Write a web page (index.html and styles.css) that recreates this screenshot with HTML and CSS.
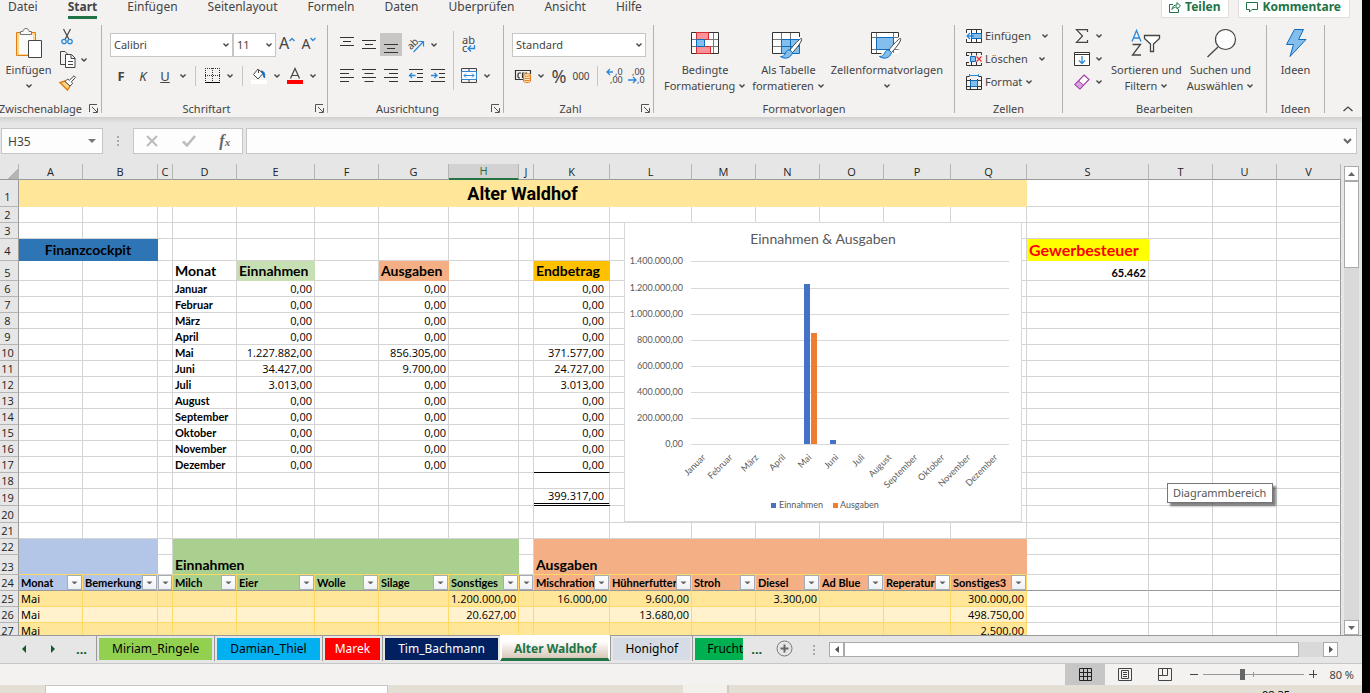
FILE: index.html
```html
<!DOCTYPE html>
<html lang="de">
<head>
    <meta charset="UTF-8">
    <meta name="viewport" content="width=device-width, initial-scale=1.0">
    <title>Alter Waldhof - Excel</title>
    <link rel="stylesheet" href="styles.css">
</head>
<body>
    <svg class="defs" aria-hidden="true">
        <symbol id="chev" viewBox="0 0 8 8"><path d="M1.500 2.500L4 5l2.500-2.500" fill="none" stroke="#444" stroke-width="1.400"/></symbol>
        <symbol id="launcher" viewBox="0 0 9 9"><path d="M.5 8V.5H8M3 3l5 5M8.500 4v4.500H4" fill="none" stroke="#555"/></symbol>
        <symbol id="brush" viewBox="0 0 24 24"><path d="M22.500 1.500c-1.500-.5-9 8-11.500 11.500l2.500 2.500C17 12 24 3.500 22.500 1.500z" fill="#fff" stroke="#444"/><path d="M11 13c-4-.5-4 3-5.500 5-1 1.200-2.500 1.500-4 1.500 4 3 10.500 2 12-4z" fill="#83beec" stroke="#0f6cbd"/></symbol>
    </svg>

    <div class="app">
        <nav class="tabs">
            <a href="#">Datei</a>
            <a href="#" class="active">Start</a>
            <a href="#">Einfügen</a>
            <a href="#">Seitenlayout</a>
            <a href="#">Formeln</a>
            <a href="#">Daten</a>
            <a href="#">Überprüfen</a>
            <a href="#">Ansicht</a>
            <a href="#">Hilfe</a>
            <div class="share">
                <button type="button"><svg width="12" height="12" viewBox="0 0 12 12" fill="none" stroke="#217346"><path d="M4 3.500H.5v8h9V8M3 8.500c0-3 2-4.500 5-4.500V1.500L11.500 5 8 8V6C6 6 4 6.500 3 8.500z"/></svg>Teilen</button>
                <button type="button"><svg width="12" height="12" viewBox="0 0 12 12" fill="none" stroke="#217346"><path d="M.5 1.500h11v7H6L3.500 11V8.500h-3z"/></svg>Kommentare</button>
            </div>
        </nav>

        <div class="ribbon">
            <section class="group clipboard">
                <div class="body">
                    <button type="button" class="big">
                        <svg width="28" height="32" viewBox="0 0 28 32"><path d="M1.500 5.500h19v23h-19z" fill="#ffd98a" stroke="#e07b16"/><path d="M4 8h14v19H4z" fill="#fafafa"/><path d="M5.500 7.500v-3H8c0-4 6-4 6 0h2.500v3z" fill="#fafafa" stroke="#777"/><path d="M13.500 13.500h13v17h-13z" fill="#fff" stroke="#444"/></svg>
                        <span>Einfügen</span>
                        <svg class="chev"><use href="#chev"/></svg>
                    </button>
                    <div class="stack">
                        <div class="line"><button type="button" class="ico" aria-label="Ausschneiden"><svg width="12" height="16" viewBox="0 0 12 16" fill="none"><path d="M2.500 0L8 10.500M9.500 0L4 10.500" stroke="#444" stroke-width="1.200"/><circle cx="3" cy="12.500" r="2.200" stroke="#2b88d8" stroke-width="1.300"/><circle cx="9" cy="12.500" r="2.200" stroke="#2b88d8" stroke-width="1.300"/></svg></button></div>
                        <div class="line"><button type="button" class="ico" aria-label="Kopieren"><svg width="17" height="17" viewBox="0 0 17 17" fill="none" stroke="#444"><path d="M6 13.500H1.500v-13H6L8.500 3"/><path d="M6.500 3.500h6l3.500 3.500v9.500H6.500zM12 4v3.500h4M9 10.500h5M9 13.500h5" fill="#fff"/></svg></button><button type="button" class="drop" aria-label="Mehr"><svg class="chev"><use href="#chev"/></svg></button></div>
                        <div class="line"><button type="button" class="ico" aria-label="Format übertragen"><svg width="17" height="16" viewBox="0 0 17 16"><path d="M6 6L1 7.500 8.500 15l2.700-4.500z" fill="#ffd98a" stroke="#e07b16" stroke-width="1.400"/><path d="M15 .8l-4.500 4.400-2.200-1-2.300 2.300 5 4.500 2.500-2.300-1-2L16.500 2.300z" fill="#fff" stroke="#444"/></svg></button></div>
                    </div>
                </div>
                <footer>Zwischenablage<svg class="launcher"><use href="#launcher"/></svg></footer>
            </section>

            <section class="group font">
                <div class="body rows">
                    <div class="line">
                        <select class="fontname" aria-label="Schriftart"><option>Calibri</option></select>
                        <select class="fontsize" aria-label="Schriftgrad"><option>11</option></select>
                        <button type="button" class="ico grow">A<svg width="6" height="5" viewBox="0 0 6 5"><path d="M.5 4L3 1.500 5.500 4" fill="none" stroke="#2b88d8" stroke-width="1.300"/></svg></button>
                        <button type="button" class="ico shrink">A<svg width="6" height="5" viewBox="0 0 6 5"><path d="M.5 1L3 3.500 5.500 1" fill="none" stroke="#2b88d8" stroke-width="1.300"/></svg></button>
                    </div>
                    <div class="line">
                        <button type="button" class="ico"><b>F</b></button>
                        <button type="button" class="ico"><i>K</i></button>
                        <button type="button" class="ico"><u>U</u></button>
                        <button type="button" class="drop" aria-label="Mehr"><svg class="chev"><use href="#chev"/></svg></button>
                        <span class="sep"></span>
                        <button type="button" class="ico" aria-label="Rahmen"><svg width="15" height="15" viewBox="0 0 15 15"><path d="M0 .5h15M0 7.500h15M.5 0v13M7.500 0v13M14.500 0v13" fill="none" stroke="#333" stroke-dasharray="1 1"/><path d="M0 14.500h15" stroke="#000"/></svg></button>
                        <button type="button" class="drop" aria-label="Mehr"><svg class="chev"><use href="#chev"/></svg></button>
                        <span class="sep"></span>
                        <button type="button" class="ico" aria-label="Füllfarbe"><svg width="16" height="16" viewBox="0 0 16 16"><path d="M7 1L2.500 6.500 7 11l5-5.500L7.500 1.500V5" fill="#fff" stroke="#444"/><path d="M10 3c4 0 4 4 3.500 7-1-1-1-4-3.500-7z" fill="#0f6cbd" stroke="#0f6cbd"/><path d="M0 12h16v4H0z" fill="#fff"/></svg></button>
                        <button type="button" class="drop" aria-label="Mehr"><svg class="chev"><use href="#chev"/></svg></button>
                        <button type="button" class="ico" aria-label="Schriftfarbe"><svg width="16" height="16" viewBox="0 0 16 16"><path d="M3.500 10.500L8 .5l4.500 10M5 7.500h6" fill="none" stroke="#444" stroke-width="1.200"/><path d="M0 12h16v4H0z" fill="red"/></svg></button>
                        <button type="button" class="drop" aria-label="Mehr"><svg class="chev"><use href="#chev"/></svg></button>
                    </div>
                </div>
                <footer>Schriftart<svg class="launcher"><use href="#launcher"/></svg></footer>
            </section>

            <section class="group align">
                <div class="body">
                    <div class="rows">
                        <div class="line">
                            <button type="button" class="ico" aria-label="Oben"><svg width="14" height="16" viewBox="0 0 14 16" stroke="#333"><path d="M0 .5h14M3 4.500h8M0 8.500h14"/></svg></button>
                            <button type="button" class="ico" aria-label="Mitte"><svg width="14" height="16" viewBox="0 0 14 16" stroke="#333"><path d="M0 3.500h14M3 7.500h8M0 11.500h14"/></svg></button>
                            <button type="button" class="ico on" aria-label="Unten"><svg width="14" height="16" viewBox="0 0 14 16" stroke="#333"><path d="M0 7.500h14M3 11.500h8M0 15.500h14"/></svg></button>
                            <span class="space"></span>
                            <button type="button" class="ico" aria-label="Ausrichtung"><svg width="17" height="17" viewBox="0 0 17 17"><text x="-1" y="11" font-size="10" fill="#444" transform="rotate(-45 5 8)">ab</text><path d="M5.500 16L15 6M10.500 5.500h5v5" fill="none" stroke="#2b88d8" stroke-width="1.200"/></svg></button>
                            <button type="button" class="drop" aria-label="Mehr"><svg class="chev"><use href="#chev"/></svg></button>
                        </div>
                        <div class="line">
                            <button type="button" class="ico" aria-label="Links"><svg width="14" height="14" viewBox="0 0 14 14" stroke="#333"><path d="M0 .5h14M0 4.500h9M0 8.500h14M0 12.500h9"/></svg></button>
                            <button type="button" class="ico" aria-label="Zentriert"><svg width="14" height="14" viewBox="0 0 14 14" stroke="#333"><path d="M0 .5h14M2.500 4.500h9M0 8.500h14M2.500 12.500h9"/></svg></button>
                            <button type="button" class="ico" aria-label="Rechts"><svg width="14" height="14" viewBox="0 0 14 14" stroke="#333"><path d="M0 .5h14M5 4.500h9M0 8.500h14M5 12.500h9"/></svg></button>
                            <span class="space"></span>
                            <button type="button" class="ico" aria-label="Einzug verkleinern"><svg width="14" height="14" viewBox="0 0 14 14" fill="none"><path d="M0 .5h14M8 4.500h6M8 8.500h6M0 12.500h14" stroke="#333"/><path d="M6.500 6.500h-6M3 4L.5 6.500 3 9" stroke="#2b88d8" stroke-width="1.300"/></svg></button>
                            <button type="button" class="ico" aria-label="Einzug vergrößern"><svg width="14" height="14" viewBox="0 0 14 14" fill="none"><path d="M0 .5h14M8 4.500h6M8 8.500h6M0 12.500h14" stroke="#333"/><path d="M0 6.500h6M3.500 4L6 6.500 3.500 9" stroke="#2b88d8" stroke-width="1.300"/></svg></button>
                        </div>
                    </div>
                    <span class="sep tall"></span>
                    <div class="rows">
                        <div class="line">
                            <button type="button" class="ico" aria-label="Textumbruch"><svg width="16" height="18" viewBox="0 0 16 18"><text x="1" y="8" font-size="11" fill="#444"><tspan>ab</tspan><tspan x="1" dy="8">c</tspan></text><path d="M13.500 9v3.500h-6M10 9.500l-3 3 3 3" fill="none" stroke="#2b88d8" stroke-width="1.300"/></svg></button>
                        </div>
                        <div class="line">
                            <button type="button" class="ico" aria-label="Verbinden"><svg width="16" height="15" viewBox="0 0 16 15" fill="none"><path d="M.5.5h15v14H.5zM8 .5v3M8 11.500v3" stroke="#444"/><path d="M.5 3.500h15v8H.5z" fill="#fff" stroke="#2b88d8"/><path d="M3 7.500h10M5 5.500l-2 2 2 2M11 5.500l2 2-2 2" stroke="#2b88d8"/></svg></button>
                            <button type="button" class="drop" aria-label="Mehr"><svg class="chev"><use href="#chev"/></svg></button>
                        </div>
                    </div>
                </div>
                <footer>Ausrichtung<svg class="launcher"><use href="#launcher"/></svg></footer>
            </section>

            <section class="group number">
                <div class="body rows">
                    <div class="line">
                        <select class="numformat" aria-label="Zahlenformat"><option>Standard</option></select>
                    </div>
                    <div class="line">
                        <button type="button" class="ico" aria-label="Währung"><svg width="17" height="14" viewBox="0 0 17 14"><path d="M8 10.500H.5v-9h15V5M6 4H4L3 5v3l1 1h1M7.500 9V4h2M12 4h-1v2" fill="none" stroke="#333" stroke-width="1.200"/><path d="M8.500 6v6c0 2 7 2 7 0V6z" fill="#fff1dc" stroke="#e07b16"/><ellipse cx="12" cy="6" rx="3.500" ry="1.300" fill="#fff1dc" stroke="#e07b16"/><path d="M8.500 8.500c1 1.500 6 1.500 7 0M8.500 10.500c1 1.500 6 1.500 7 0" fill="none" stroke="#e07b16"/></svg></button>
                        <button type="button" class="drop" aria-label="Mehr"><svg class="chev"><use href="#chev"/></svg></button>
                        <button type="button" class="ico percent">%</button>
                        <button type="button" class="ico thousands">000</button>
                        <span class="sep"></span>
                        <button type="button" class="ico" aria-label="Dezimalstelle hinzufügen"><svg width="17" height="16" viewBox="0 0 17 16"><text x="9" y="7" font-size="9" fill="#444"><tspan>,0</tspan><tspan x="4" dy="8">,00</tspan></text><path d="M7 4H1.500M4 1L1 4l3 3" fill="none" stroke="#2b88d8" stroke-width="1.300"/></svg></button>
                        <button type="button" class="ico" aria-label="Dezimalstelle löschen"><svg width="17" height="16" viewBox="0 0 17 16"><text x="4" y="7" font-size="9" fill="#444"><tspan>,00</tspan><tspan x="9" dy="8">,0</tspan></text><path d="M0 12h7.500M5 9l3 3-3 3" fill="none" stroke="#2b88d8" stroke-width="1.300"/></svg></button>
                    </div>
                </div>
                <footer>Zahl<svg class="launcher"><use href="#launcher"/></svg></footer>
            </section>

            <section class="group styles">
                <div class="body">
                    <button type="button" class="big">
                        <svg width="28" height="32" viewBox="0 0 28 32"><path d="M.5 5.500h27v21H.5z" fill="#fff"/><path d="M.5 12.500h27M.5 19.500h27M22.500 5v21" stroke="#777"/><path d="M.5 5.500h27v21H.5z" fill="none" stroke="#333"/><path d="M5.500 5.500h12v7h-12zM5.500 19.500h14v7h-14z" fill="#ff9199" stroke="#d92c2c"/><path d="M5.500 12.500h8v7h-8z" fill="#83beec" stroke="#0f6cbd"/></svg>
                        <span>Bedingte</span>
                        <span>Formatierung <svg class="chev"><use href="#chev"/></svg></span>
                    </button>
                    <button type="button" class="big">
                        <svg width="32" height="32" viewBox="0 0 32 32"><path d="M.5 5.500h27v21H.5z" fill="#fff"/><path d="M.5 12.500h27M.5 19.500h27M9.500 5v21M18.500 5v21" stroke="#777"/><path d="M27.500 10V5.500H.5v21h10" fill="none" stroke="#333"/><path d="M9.500 12.500h18v14h-18zM9.500 19.500h18M18.500 12.500v14" fill="#83beec" stroke="#0f6cbd"/><use href="#brush" x="7" y="10" width="24" height="24"/></svg>
                        <span>Als Tabelle</span>
                        <span>formatieren <svg class="chev"><use href="#chev"/></svg></span>
                    </button>
                    <button type="button" class="big">
                        <svg width="32" height="32" viewBox="0 0 32 32"><path d="M.5 5.500h27v21H.5z" fill="#fff"/><path d="M.5 10.500h27M.5 22.500h27M5.500 5v21M22.500 5v21" stroke="#777"/><path d="M27.500 10V5.500H.5v21h10" fill="none" stroke="#333"/><path d="M5.500 10.500h17v12h-17z" fill="#83beec" stroke="#0f6cbd"/><use href="#brush" x="7" y="10" width="24" height="24"/></svg>
                        <span>Zellenformatvorlagen</span>
                        <svg class="chev"><use href="#chev"/></svg>
                    </button>
                </div>
                <footer>Formatvorlagen</footer>
            </section>

            <section class="group cells">
                <div class="body">
                    <div class="stack">
                        <button type="button" class="text wide"><svg width="16" height="14" viewBox="0 0 16 14"><path d="M.5.5h15v13H.5zM5.500.5v13M10.500.5v13" fill="#fff" stroke="#333"/><path d="M5.500 4.500h10v5h-10z" fill="#83beec" stroke="#0f6cbd"/><path d="M0 4h5v6H0z" fill="#fff"/><path d="M8 7H.8M4 4L1 7l3 3" fill="none" stroke="#2b88d8" stroke-width="1.300"/></svg>Einfügen<svg class="chev"><use href="#chev"/></svg></button>
                        <button type="button" class="text wide"><svg width="16" height="14" viewBox="0 0 16 14"><path d="M.5 3V.5h15V3M.5 11v2.500h15V11M5.500.5v3M10.500.5v3M5.500 10v3.500M10.500 10v3.500M0 3.500h3M0 10.500h3" fill="none" stroke="#333"/><path d="M4.500 4.500h5v5h-5z" fill="#83beec" stroke="#0f6cbd"/><path d="M10.500 4.500l5 5M15.500 4.500l-5 5" stroke="#e33" stroke-width="1.300"/></svg>Löschen<svg class="chev"><use href="#chev"/></svg></button>
                        <button type="button" class="text"><svg width="16" height="16" viewBox="0 0 16 16"><path d="M3 2.500H.5v13h15v-13H13M.5 6.500h15M.5 12.500h15M4.500 5v10M11.500 5v10" fill="none" stroke="#333"/><path d="M4.500 6.500h7v6h-7z" fill="#83beec" stroke="#0f6cbd"/><path d="M4 1.500h8M3.500 0v3M12.500 0v3" stroke="#2b88d8"/></svg>Format<svg class="chev"><use href="#chev"/></svg></button>
                    </div>
                </div>
                <footer>Zellen</footer>
            </section>

            <section class="group edit">
                <div class="body">
                    <div class="stack">
                        <div class="line"><button type="button" class="ico" aria-label="Summe"><svg width="14" height="14" viewBox="0 0 14 14"><path d="M12.500 3V.6H1.500L7.500 7l-6 6.400h11V11" fill="none" stroke="#444" stroke-width="1.200"/></svg></button><button type="button" class="drop" aria-label="Mehr"><svg class="chev"><use href="#chev"/></svg></button></div>
                        <div class="line"><button type="button" class="ico" aria-label="Füllbereich"><svg width="16" height="14" viewBox="0 0 16 14"><path d="M.5.5h15v13H.5zM.5 2.500h15" fill="#fff" stroke="#333"/><path d="M8 4v7.500M5 8.500l3 3 3-3" fill="none" stroke="#2b88d8" stroke-width="1.300"/></svg></button><button type="button" class="drop" aria-label="Mehr"><svg class="chev"><use href="#chev"/></svg></button></div>
                        <div class="line"><button type="button" class="ico" aria-label="Löschen"><svg width="16" height="16" viewBox="0 0 16 16"><path d="M10 1l5 4.500L6 15 1 10.500z" fill="#fff" stroke="#a33fa8" stroke-width="1.200"/><path d="M4.500 7L1 10.500 6 15l3.500-4z" fill="#d9a3dc" stroke="#a33fa8"/></svg></button><button type="button" class="drop" aria-label="Mehr"><svg class="chev"><use href="#chev"/></svg></button></div>
                    </div>
                    <button type="button" class="big">
                        <svg width="30" height="32" viewBox="0 0 30 32" fill="none" stroke-width="1.300"><path d="M1 14.500L5.500 3.500l4.500 11M2.500 11h6" stroke="#2b88d8"/><path d="M1.500 17.500h8L1.500 28h8.500" stroke="#444"/><path d="M13.500 8.500h15v3l-6 5.500v7.500h-3V17l-6-5.500z" fill="#fff" stroke="#444"/></svg>
                        <span>Sortieren und</span>
                        <span>Filtern <svg class="chev"><use href="#chev"/></svg></span>
                    </button>
                    <button type="button" class="big">
                        <svg width="30" height="32" viewBox="0 0 30 32"><circle cx="19.500" cy="12.500" r="10" fill="#fdfdfd" stroke="#444" stroke-width="1.200"/><path d="M12 20L1.500 30" stroke="#444" stroke-width="1.300"/></svg>
                        <span>Suchen und</span>
                        <span>Auswählen <svg class="chev"><use href="#chev"/></svg></span>
                    </button>
                </div>
                <footer>Bearbeiten</footer>
            </section>

            <section class="group ideas">
                <div class="body">
                    <button type="button" class="big">
                        <svg width="22" height="32" viewBox="0 0 22 32"><path d="M9.500 2.500h9l-5 10H21L5 29.500l3.500-12h-7z" fill="#83beec" stroke="#0f6cbd"/></svg>
                        <span>Ideen</span>
                    </button>
                </div>
                <footer>Ideen</footer>
            </section>
            <button type="button" class="collapse" aria-label="Menüband reduzieren"><svg width="10" height="6" viewBox="0 0 10 6"><path d="M.5 5L5 1l4.500 4" fill="none" stroke="#444" stroke-width="1.300"/></svg></button>
        </div>

        <div class="formula-bar">
            <div class="namebox"><input type="text" value="H35" aria-label="Namenfeld"><svg width="8" height="4" viewBox="0 0 8 4"><path d="M0 0h8L4 4z" fill="#777"/></svg></div>
            <span class="grip"></span>
            <div class="fx">
                <button type="button" aria-label="Abbrechen"><svg width="12" height="12" viewBox="0 0 12 12"><path d="M1 1l10 10M11 1L1 11" stroke="#bbb" stroke-width="2"/></svg></button>
                <button type="button" aria-label="Eingeben"><svg width="14" height="12" viewBox="0 0 14 12"><path d="M1 6.500L5 10.500 13 1" fill="none" stroke="#bbb" stroke-width="2.500"/></svg></button>
                <button type="button" class="fn"><i>f</i><small>x</small></button>
            </div>
            <div class="formula"><input type="text" aria-label="Bearbeitungsleiste"><svg width="9" height="6" viewBox="0 0 9 6"><path d="M1 1l3.500 3.500L8 1" fill="none" stroke="#666" stroke-width="2"/></svg></div>
        </div>

        <main class="workspace">
            <div class="sheet">
                <table id="grid"></table>

                <figure class="chart">
                    <svg width="396" height="298" viewBox="625 223 396 298">
                        <text class="chart-title" x="823" y="244" text-anchor="middle">Einnahmen &amp; Ausgaben</text>
                        <g id="axis-y"></g>
                        <g id="axis-x"></g>
                        <g id="bars"></g>
                        <path d="M771 503h5v5h-5z" fill="#4472c4"/>
                        <text x="779" y="508">Einnahmen</text>
                        <path d="M833 503h5v5h-5z" fill="#ed7d31"/>
                        <text x="840" y="508">Ausgaben</text>
                    </svg>
                </figure>
                <div class="tooltip" role="tooltip">Diagrammbereich</div>
            </div>
            <div class="vscroll">
                <button type="button" aria-label="Nach oben"><svg width="7" height="4" viewBox="0 0 7 4"><path d="M0 4h7L3.500 0z" fill="#666"/></svg></button>
                <div class="thumb"></div>
                <button type="button" aria-label="Nach unten"><svg width="7" height="4" viewBox="0 0 7 4"><path d="M0 0h7L3.500 4z" fill="#666"/></svg></button>
            </div>
        </main>

        <div class="sheet-tabs">
            <div class="arrows">
                <button type="button" aria-label="Zurück"><svg width="4" height="8" viewBox="0 0 4 8"><path d="M4 0v8L0 4z" fill="#0e5c2f"/></svg></button>
                <button type="button" aria-label="Weiter"><svg width="4" height="8" viewBox="0 0 4 8"><path d="M0 0v8l4-4z" fill="#0e5c2f"/></svg></button>
                <button type="button" class="more">...</button>
            </div>
            <button type="button" class="tab miriam">Miriam_Ringele</button>
            <button type="button" class="tab damian">Damian_Thiel</button>
            <button type="button" class="tab marek">Marek</button>
            <button type="button" class="tab tim">Tim_Bachmann</button>
            <button type="button" class="tab current">Alter Waldhof</button>
            <button type="button" class="tab honighof">Honighof</button>
            <button type="button" class="tab frucht">Frucht</button>
            <button type="button" class="more">...</button>
            <button type="button" class="add" aria-label="Neues Blatt"><svg width="17" height="17" viewBox="0 0 17 17"><circle cx="8.500" cy="8.500" r="7.500" fill="none" stroke="#777"/><path d="M8.500 4.500v8M4.500 8.500h8" stroke="#666" stroke-width="2"/></svg></button>
            <span class="grip"></span>
            <div class="hscroll">
                <button type="button" aria-label="Nach links"><svg width="4" height="7" viewBox="0 0 4 7"><path d="M4 0v7L0 3.500z" fill="#555"/></svg></button>
                <div class="thumb"></div>
                <button type="button" aria-label="Nach rechts"><svg width="4" height="7" viewBox="0 0 4 7"><path d="M0 0v7l4-3.500z" fill="#555"/></svg></button>
            </div>
        </div>

        <div class="statusbar">
            <button type="button" class="view on" aria-label="Normal"><svg width="13" height="13" viewBox="0 0 13 13"><path d="M.5.5h12v12H.5zM4.500.5v12M8.500.5v12M.5 4.500h12M.5 8.500h12" fill="none" stroke="#222"/></svg></button>
            <button type="button" class="view" aria-label="Seitenlayout"><svg width="14" height="13" viewBox="0 0 14 13"><path d="M.5.5h13v12H.5zM3.500 2.500h7v8h-7zM5 4.500h4M5 6.500h4M5 8.500h4" fill="none" stroke="#444"/></svg></button>
            <button type="button" class="view" aria-label="Umbruchvorschau"><svg width="14" height="13" viewBox="0 0 14 13"><path d="M.5.5h13v12H.5zM4.500.5v7M9.500.5v7M.5 7.500h9" fill="none" stroke="#444"/></svg></button>
            <button type="button" class="zoom-btn" aria-label="Verkleinern"><svg width="9" height="9" viewBox="0 0 9 9"><path d="M0 4.500h8" stroke="#444"/></svg></button>
            <input type="range" min="0" max="100" value="39" aria-label="Zoom">
            <button type="button" class="zoom-btn" aria-label="Vergrößern"><svg width="9" height="9" viewBox="0 0 9 9"><path d="M0 4.500h8M4.500 0v8" stroke="#444"/></svg></button>
            <span class="percent">80 %</span>
        </div>
    </div>

    <div class="desktop">
        <div class="window"></div>
        <div class="panel"></div>
        <time>08:35</time>
    </div>

    <script>
        const cols = ['A', 'B', 'C', 'D', 'E', 'F', 'G', 'H', 'J', 'K', 'L', 'M', 'N', 'O', 'P', 'Q', 'S', 'T', 'U', 'V'];
        const widths = [64, 75, 15, 64, 78, 64, 70, 70, 15, 76, 82, 64, 64, 64, 67, 76, 122, 64, 64];
        const heights = { 1: 27, 4: 22, 5: 20, 19: 17, 20: 17, 23: 20 };
        const months = ['Januar', 'Februar', 'März', 'April', 'Mai', 'Juni', 'Juli', 'August', 'September', 'Oktober', 'November', 'Dezember'];
        const amounts = {
            Mai: ['1.227.882,00', '856.305,00', '371.577,00'],
            Juni: ['34.427,00', '9.700,00', '24.727,00'],
            Juli: ['3.013,00', '0,00', '3.013,00']
        };

        // Zelle -> [Text, Klassen, colspan]
        const cells = {
            A1: ['Alter Waldhof', 'title', 16],
            A4: ['Finanzcockpit', 'cockpit', 2],
            S4: ['Gewerbesteuer', 'tax'],
            D5: ['Monat', 'head'],
            E5: ['Einnahmen', 'head in'],
            G5: ['Ausgaben', 'head out'],
            K5: ['Endbetrag', 'head end'],
            S5: ['65.462', 'num bold'],
            K19: ['399.317,00', 'num acc total'],
            A22: ['', 'blue', 2], D22: ['', 'green', 5], K22: ['', 'orange', 7],
            A23: ['', 'blue', 2], D23: ['Einnahmen', 'head green', 5], K23: ['Ausgaben', 'head orange', 7]
        };
        months.forEach((m, i) => {
            const v = amounts[m] || ['0,00', '0,00', '0,00'];
            const r = i + 6;
            cells['D' + r] = [m, 'bold'];
            cells['E' + r] = [v[0], 'num'];
            cells['G' + r] = [v[1], 'num'];
            cells['K' + r] = [v[2], 'num acc' + (r === 17 ? ' sum' : '')];
        });

        // Tabelle ab Zeile 24
        const titles = ['Monat', 'Bemerkung', '', 'Milch', 'Eier', 'Wolle', 'Silage', 'Sonstiges', '', 'Mischration', 'Hühnerfutter', 'Stroh', 'Diesel', 'Ad Blue', 'Reperatur', 'Sonstiges3'];
        const entries = {
            A25: 'Mai', H25: '1.200.000,00', K25: '16.000,00', L25: '9.600,00', N25: '3.300,00', Q25: '300.000,00',
            A26: 'Mai', H26: '20.627,00', L26: '13.680,00', Q26: '498.750,00',
            A27: 'Mai', Q27: '2.500,00'
        };
        const arrow = '<svg width="7" height="4" viewBox="0 0 7 4"><path d="M.5.5h6L4 3H3z" fill="#666"/></svg>';
        titles.forEach((t, i) => {
            const color = t === '' ? 'narrow' : i < 2 ? 'blue' : i < 9 ? 'green' : 'orange';
            cells[cols[i] + 24] = ['<div><span>' + t + '</span><button type="button" aria-label="Filter ' + t + '">' + arrow + '</button></div>', 'filter ' + color];
            for (let r = 25; r <= 27; r++) {
                const key = cols[i] + r;
                cells[key] = [entries[key] || '', (i === 0 ? 'entry' : 'num') + (r % 2 ? ' band' : ' band light')];
            }
        });

        let html = '<colgroup><col class="rownum">' + widths.map(w => '<col style="width:' + w + 'px">').join('') + '<col></colgroup>';
        html += '<thead><tr><th class="corner"></th>' + cols.map(c => '<th' + (c === 'H' ? ' class="selected"' : '') + '>' + c + '</th>').join('') + '</tr></thead><tbody>';
        for (let r = 1; r <= 27; r++) {
            html += '<tr class="r' + r + '" style="height:' + (heights[r] || 16) + 'px"><th>' + r + '</th>';
            for (let c = 0; c < cols.length; c++) {
                const cell = cells[cols[c] + r];
                if (!cell) {
                    html += '<td></td>';
                    continue;
                }
                const span = cell[2] || 1;
                html += '<td class="' + cell[1] + '"' + (span > 1 ? ' colspan="' + span + '"' : '') + '>' + cell[0] + '</td>';
                c += span - 1;
            }
            html += '</tr>';
        }
        document.getElementById('grid').innerHTML = html + '</tbody>';

        // Diagramm
        const base = 444, plotLeft = 691, step = 318 / 12;
        const scale = v => Math.ceil(base - v * 183 / 1400000);
        let axisY = '', axisX = '', bars = '';
        for (let v = 0; v <= 1400000; v += 200000) {
            const y = scale(v);
            axisY += '<path d="M' + plotLeft + ' ' + (y + 0.5) + 'h318" stroke="#d9d9d9"/>' +
                '<text x="683" y="' + (y + 3) + '" text-anchor="end">' + v.toLocaleString('de-DE').replace(/,/g, '.') + ',00</text>';
        }
        months.forEach((m, i) => {
            const x = Math.round(plotLeft + step * (i + 0.5)) + 2;
            axisX += '<text x="' + x + '" y="458" text-anchor="end" transform="rotate(-45 ' + x + ' 458)">' + m + '</text>';
        });
        [[4, 0, 1227882, '#4472c4'], [4, 7, 856305, '#ed7d31'], [5, 0, 34427, '#4472c4']].forEach(b => {
            const x = Math.floor(plotLeft + step * b[0]) + 7 + b[1];
            const y = scale(b[2]);
            bars += '<rect x="' + x + '" y="' + y + '" width="6" height="' + (base - y) + '" fill="' + b[3] + '"/>';
        });
        document.getElementById('axis-y').innerHTML = axisY;
        document.getElementById('axis-x').innerHTML = axisX;
        document.getElementById('bars').innerHTML = bars;
    </script>
</body>
</html>
```
FILE: styles.css
```css
* {
    box-sizing: border-box;
}
body {
    margin: 0;
    height: 100vh;
    display: flex;
    flex-direction: column;
    overflow: hidden;
    background-color: #000;
    font-family: "Noto Sans", "Open Sans", sans-serif;
    font-size: 12px;
    color: #444;
}
button,
input,
select {
    font: inherit;
    color: inherit;
    margin: 0;
    padding: 0;
    border: none;
    background: none;
}
svg {
    display: block;
    flex: none;
    overflow: visible;
}
.defs {
    position: absolute;
    width: 0;
    height: 0;
}
.app {
    flex: 1;
    min-height: 0;
    margin-right: 8px;
    display: flex;
    flex-direction: column;
    background-color: #e6e6e6;
}

/* Registerkarten */
.tabs {
    display: flex;
    height: 20px;
    padding-left: 8px;
    gap: 30px;
    background-color: #f3f2f1;
}
.tabs a {
    height: 19px;
    line-height: 13px;
    color: #444;
    text-decoration: none;
}
.tabs a.active {
    font-weight: bold;
    border-bottom: 3px solid #217346;
}
.share {
    display: flex;
    gap: 9px;
    margin-left: auto;
    margin-right: 12px;
}
.share button {
    display: flex;
    align-items: center;
    gap: 4px;
    height: 18px;
    padding: 0 8px 4px 7px;
    border: 1px solid #e1dfdd;
    border-top: none;
    background-color: #fff;
    font-weight: bold;
    line-height: 14px;
    color: #217346;
}

/* Menüband */
.ribbon {
    display: flex;
    height: 97px;
    padding-top: 5px;
    background-color: #f3f2f1;
    flex: none;
}
.group {
    display: flex;
    flex-direction: column;
    height: 88px;
    border-right: 1px solid #b3b0ad;
    flex: none;
}
.group .body {
    flex: 1;
    display: flex;
}
.group footer {
    position: relative;
    line-height: 8px;
    font-size: 11px;
    text-align: center;
    white-space: nowrap;
}
.clipboard { width: 102px; }
.clipboard footer { text-align: left; text-indent: -1px; }
.font { width: 226px; padding-left: 8px; }
.align { width: 176px; padding-left: 8px; }
.number { width: 150px; padding-left: 8px; }
.font footer,
.align footer,
.number footer {
    padding-right: 24px;
}
.styles { width: 301px; }
.styles .body { padding-left: 10px; gap: 6px; }
.cells { width: 108px; }
.edit { width: 204px; }
.edit .body { gap: 5px; }
.ideas { width: 58px; }
.launcher {
    position: absolute;
    right: 3px;
    bottom: 0;
    width: 9px;
    height: 9px;
}
.chev {
    display: inline-block;
    width: 8px;
    height: 8px;
}
.line {
    display: flex;
    align-items: center;
    height: 23px;
}
.group .rows {
    display: flex;
    flex-direction: column;
    gap: 8px;
    padding-top: 8px;
}
.ico {
    width: 22px;
    height: 23px;
    display: flex;
    align-items: center;
    justify-content: center;
    flex: none;
    font-size: 13px;
}
.ico.on {
    background-color: #c8c6c4;
}
.drop {
    width: 14px;
    height: 23px;
    display: flex;
    align-items: center;
    justify-content: center;
}
.space {
    width: 3px;
}
.sep {
    width: 1px;
    height: 20px;
    margin: 0 5px;
    background-color: #c8c6c4;
}
.sep.tall {
    height: 59px;
    margin: 6px 4px 0;
}
.big {
    display: flex;
    flex-direction: column;
    align-items: center;
    padding-top: 2px;
    line-height: 16px;
    font-size: 11px;
    white-space: nowrap;
}
.big > svg:first-child {
    margin-bottom: 3px;
}
.big > .chev {
    margin-top: 4px;
}
.clipboard .big {
    width: 57px;
}
.ideas .big {
    width: 57px;
}
.stack .ico {
    width: 20px;
}
.font select,
.number select {
    height: 24px;
    padding-left: 3px;
    border: 1px solid #c8c6c4;
    background: #fff url("data:image/svg+xml,%3Csvg xmlns='http://www.w3.org/2000/svg' width='8' height='8'%3E%3Cpath d='M1.500 2.500L4 5l2.500-2.500' fill='none' stroke='%23444' stroke-width='1.400'/%3E%3C/svg%3E") no-repeat right 2px center;
    font-size: 11px;
    appearance: none;
}
.fontname { width: 123px; }
.fontsize { width: 43px; }
.number .numformat { width: 134px; }
.grow {
    font-size: 16px;
    align-items: flex-start;
    line-height: 20px;
}
.shrink {
    font-size: 14px;
    align-items: flex-start;
    line-height: 22px;
}
.grow svg,
.shrink svg {
    margin-top: 4px;
}
.ico.percent {
    font-size: 18px;
}
.ico.thousands {
    font-size: 10px;
}
.cells .stack {
    padding-left: 11px;
    margin-top: -1px;
}
.edit .stack {
    padding-left: 9px;
    margin-top: -1px;
}
.text {
    display: flex;
    align-items: center;
    gap: 3px;
    height: 23px;
    font-size: 11px;
}
.text.wide .chev {
    margin-left: 7px;
}
.collapse {
    margin-left: auto;
    margin-right: 9px;
    padding-top: 76px;
}

/* Bearbeitungsleiste */
.formula-bar {
    display: flex;
    flex: none;
    height: 47px;
    padding: 11px 5px 10px 1px;
    background: linear-gradient(#cfcfcf, #e6e6e6 6px);
}
.namebox,
.fx,
.formula {
    display: flex;
    align-items: center;
    border: 1px solid #c6c6c6;
    background-color: #fdfdfd;
}
.namebox {
    width: 102px;
    padding: 0 6px;
}
.namebox input,
.formula input {
    flex: 1;
    min-width: 0;
    outline: none;
}
.grip {
    width: 2px;
    height: 10px;
    margin: auto 14px;
    background: repeating-linear-gradient(#aaa 0 2px, transparent 2px 4px);
}
.fx {
    width: 110px;
    justify-content: space-around;
    margin-right: 3px;
}
.fn {
    font-family: "Liberation Serif", serif;
    font-weight: bold;
    font-size: 16px;
    line-height: 16px;
    color: #666;
}
.fn small {
    font-size: 11px;
    font-style: italic;
}
.formula {
    flex: 1;
    padding: 0 4px;
}

/* Tabellenblatt */
.workspace {
    flex: 1;
    min-height: 0;
    display: flex;
    border-bottom: 1px solid #999;
}
.sheet {
    position: relative;
    flex: 1;
    overflow: hidden;
}
#grid {
    width: 100%;
    table-layout: fixed;
    border-collapse: separate;
    border-spacing: 0;
    font-family: "Open Sans", sans-serif;
    font-size: 11px;
    color: #000;
    background-color: #fff;
}
.rownum {
    width: 19px;
}
#grid td,
#grid th {
    padding: 0 2px;
    border-right: 1px solid #d4d4d4;
    border-bottom: 1px solid #d4d4d4;
    line-height: 15px;
    vertical-align: bottom;
    white-space: nowrap;
    overflow: hidden;
}
#grid th {
    padding: 0;
    border-color: #b5b5b5;
    background-color: #e6e6e6;
    font-weight: normal;
    color: #222;
}
#grid tbody th {
    border-right-color: #999;
    padding-right: 3px;
}
#grid .r1 th,
#grid .r4 th {
    padding-bottom: 2px;
}
#grid thead th {
    height: 16px;
    border-bottom-color: #999;
}
#grid thead th.selected {
    background-color: #d2d2d2;
    border-bottom: 2px solid #217346;
    line-height: 14px;
    color: #217346;
}
#grid .corner {
    background: linear-gradient(135deg, #e6e6e6 68%, #b5b5b5 68%);
}
#grid td:last-child {
    border-right-color: #999;
}
#grid .num {
    text-align: right;
}
#grid .acc {
    padding-right: 5px;
}
#grid .bold {
    font-family: Lato, sans-serif;
    font-weight: bold;
}
#grid .head {
    font-family: Lato, sans-serif;
    font-size: 14px;
    font-weight: bold;
    line-height: 18px;
}
#grid .title {
    border-color: #ffe699;
    background-color: #ffe699;
    font-family: Roboto, sans-serif;
    font-size: 18px;
    font-weight: bold;
    line-height: 25px;
    text-align: center;
}
#grid .cockpit {
    border-color: #2e75b6;
    background-color: #2e75b6;
    font-family: Lato, sans-serif;
    font-size: 14px;
    font-weight: bold;
    line-height: 20px;
    text-align: center;
}
#grid .tax {
    border-color: #ff0;
    background-color: #ff0;
    font-family: Lato, sans-serif;
    font-size: 16px;
    font-weight: bold;
    line-height: 20px;
    color: #f00;
}
#grid .in {
    border-color: #c6e0b4;
    background-color: #c6e0b4;
}
#grid .out {
    border-color: #f4b084;
    background-color: #f4b084;
}
#grid .end {
    border-color: #ffc000;
    background-color: #ffc000;
}
#grid .sum {
    border-bottom-color: #000;
}
#grid .total {
    border-bottom: 3px double #000;
    line-height: 14px;
}
#grid .blue {
    border-color: #b4c6e7;
    background-color: #b4c6e7;
}
#grid .green {
    border-color: #a9d08e;
    background-color: #a9d08e;
}
#grid .orange {
    border-color: #f4b084;
    background-color: #f4b084;
}
#grid .r23 .blue,
#grid .r23 .green,
#grid .r23 .orange {
    border-bottom-color: #ffd966;
}
#grid .r24 td {
    border-bottom-color: #999;
}
#grid .filter {
    padding: 0 0 0 2px;
    border-right-color: #ffd966;
    font-family: Lato, sans-serif;
    font-weight: bold;
}
.filter div {
    display: flex;
    height: 15px;
}
.filter span {
    flex: 1;
    overflow: hidden;
}
.filter button {
    flex: none;
    display: flex;
    align-items: center;
    justify-content: center;
    width: 15px;
    height: 15px;
    border: 1px solid #a5acb5;
    background: linear-gradient(#fff, #eef1f6);
}
#grid .narrow {
    padding: 0;
}
.narrow button {
    width: 14px;
}
#grid .band {
    border-color: #ffd966;
    background-color: #ffe699;
}
#grid .light {
    background-color: #fff2cc;
}
#grid .entry {
    font-family: "Noto Sans", sans-serif;
}

.chart {
    position: absolute;
    left: 624px;
    top: 58px;
    margin: 0;
    border: 1px solid #d9d9d9;
    background-color: #fff;
}
.chart text {
    font-family: Lato, sans-serif;
    font-size: 9px;
    fill: #595959;
}
.chart .chart-title {
    font-size: 14px;
}
.tooltip {
    position: absolute;
    left: 1167px;
    top: 319px;
    padding: 0 6px 0 5px;
    border: 1px solid #767676;
    background-color: #fff;
    box-shadow: 3px 3px 2px rgba(0, 0, 0, 0.5);
    font-size: 11px;
    line-height: 18px;
    color: #575757;
}

.vscroll {
    display: flex;
    flex-direction: column;
    width: 15px;
    margin: 2px 3px 0 3px;
    background-color: #d9d9d9;
}
.vscroll button,
.hscroll button {
    display: flex;
    align-items: center;
    justify-content: center;
    width: 15px;
    height: 15px;
    border: 1px solid #aaa;
    background-color: #fff;
}
.vscroll .thumb {
    width: 15px;
    height: 87px;
    margin-bottom: auto;
    border: 1px solid #aaa;
    background-color: #fff;
}

/* Blattregister */
.sheet-tabs {
    display: flex;
    align-items: flex-start;
    flex: none;
    height: 28px;
    border-bottom: 1px solid #c6c6c6;
}
.arrows {
    display: flex;
    width: 97px;
    height: 25px;
    padding-left: 22px;
    gap: 25px;
    border-right: 1px solid #999;
    margin-right: 2px;
}
.more {
    height: 25px;
    font-weight: bold;
    font-size: 13px;
    color: #0e5c2f;
}
.arrows .more {
    margin-left: -4px;
}
.tab {
    height: 25px;
    margin-right: 5px;
    padding: 0 13px 2px;
    border: solid #e6e6e6;
    border-width: 2px 0 1px;
    color: #000;
    white-space: nowrap;
    box-shadow: 2px 0 #e6e6e6, 3px 0 #999;
}
.miriam { background-color: #92d050; }
.damian { background-color: #00b0f0; }
.marek { background-color: #f00; }
.tim { background-color: #002060; }
.honighof { background-color: #d6dce5; }
.frucht { background-color: #00b050; }
.marek,
.tim {
    color: #fff;
}
.sheet-tabs .marek {
    padding: 0 10px 2px;
}
.sheet-tabs .tim {
    margin-right: 2px;
    box-shadow: none;
}
.sheet-tabs .current {
    margin-top: -1px;
    margin-right: 3px;
    height: 26px;
    padding: 1px 12px 0;
    border: 2px solid #fff;
    border-bottom: 3px solid #217346;
    background: linear-gradient(#fff 20%, #d9c8b8);
    box-shadow: 1px 0 #999;
    font-weight: bold;
    color: #217346;
}
.sheet-tabs .honighof {
    padding: 0 12px 2px;
}
.sheet-tabs .frucht {
    width: 48px;
    margin-right: 8px;
    padding: 0 0 2px 12px;
    overflow: hidden;
    box-shadow: none;
}
.add {
    margin: 4px 0 0 14px;
}
.sheet-tabs .grip {
    margin: 9px 14px 0 20px;
}
.hscroll {
    display: flex;
    flex: 1;
    margin: 6px 24px 0 0;
    background-color: #d9d9d9;
}
.hscroll .thumb {
    flex: 1;
    margin-right: 24px;
    border: 1px solid #aaa;
    background-color: #fff;
}

/* Statusleiste */
.statusbar {
    display: flex;
    align-items: center;
    justify-content: flex-end;
    flex: none;
    height: 21px;
    padding-right: 8px;
    background-color: #f3f2f1;
}
.view {
    display: flex;
    align-items: center;
    justify-content: center;
    width: 40px;
    height: 21px;
}
.view.on {
    background-color: #c6c6c6;
}
.zoom-btn {
    display: flex;
    justify-content: center;
    width: 18px;
}
.statusbar input {
    width: 101px;
    height: 12px;
    appearance: none;
    background: linear-gradient(#999, #999) center / 100% 1px no-repeat, linear-gradient(#999, #999) 50px center / 1px 5px no-repeat;
}
.statusbar input::-webkit-slider-thumb {
    appearance: none;
    width: 5px;
    height: 11px;
    background-color: #666;
}
.statusbar .percent {
    width: 32px;
    font-size: 11px;
    text-align: right;
    white-space: nowrap;
}

.desktop {
    flex: none;
    display: flex;
    height: 8px;
    margin-right: 8px;
    overflow: hidden;
    background-color: #e4dfd5;
}
.desktop .window {
    width: 343px;
    margin-left: 45px;
    border: 1px solid #c6c6c6;
    border-bottom: none;
    background-color: #fff;
}
.desktop .panel {
    width: 46px;
    margin-left: 295px;
    border-right: 2px solid #cfcbc4;
    background-color: #f3f0eb;
}
.desktop time {
    margin-left: auto;
    margin-right: 72px;
    font-size: 11px;
    line-height: 20px;
    color: #000;
}
```
